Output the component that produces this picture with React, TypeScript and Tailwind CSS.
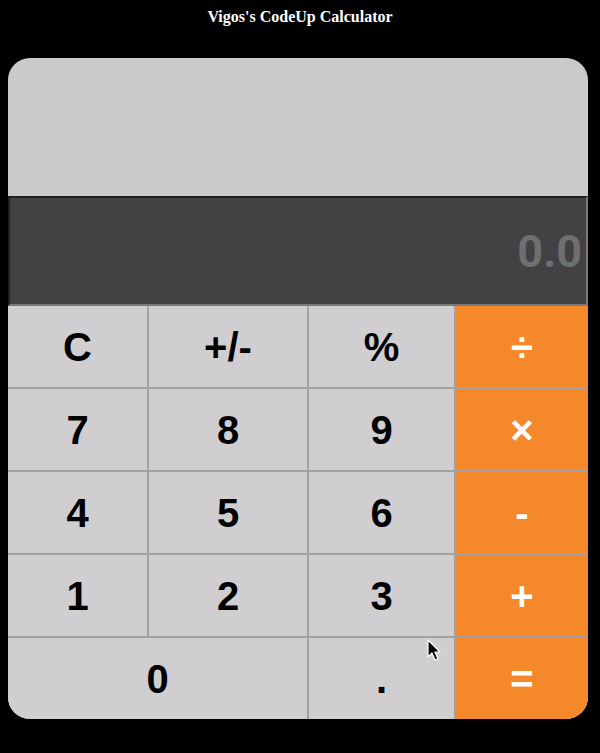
import React from "react";

type Key = { label: string; op?: boolean; wide?: boolean };

const keys: Key[] = [
  { label: "C" },
  { label: "+/-" },
  { label: "%" },
  { label: "÷", op: true },
  { label: "7" },
  { label: "8" },
  { label: "9" },
  { label: "×", op: true },
  { label: "4" },
  { label: "5" },
  { label: "6" },
  { label: "-", op: true },
  { label: "1" },
  { label: "2" },
  { label: "3" },
  { label: "+", op: true },
  { label: "0", wide: true },
  { label: "." },
  { label: "=", op: true },
];

const App: React.FC = () => {
  return (
    <div className="min-h-[753px] bg-black pt-[6px] px-2">
      {/* Title */}
      <h3 className="text-center text-white font-bold text-[16px] leading-[22px] font-['Liberation_Serif',serif]">
        Vigos's CodeUp Calculator
      </h3>

      {/* Calculator body */}
      <div className="relative mt-[30px] w-[580px] rounded-[22px] overflow-hidden bg-[#cbc9cc]">
        <div className="h-[138px]" />

        {/* Display */}
        <div className="h-[110px] bg-[#434144] border-2 border-t-[#1f1f1f] border-l-[#1f1f1f] border-b-[#7a787b] border-r-[#7a787b] flex items-center justify-end pr-[4px]">
          <span className="text-[#6f6e70] font-bold text-[45px] font-['Roboto',sans-serif] mt-[2px]">
            0.0
          </span>
        </div>

        {/* Keys */}
        <div className="grid grid-cols-[139px_158px_145px_132px] auto-rows-[81px] gap-[2px] bg-[#a2a1a3]">
          {keys.map((k) => (
            <button
              key={k.label}
              className={
                (k.op ? "bg-[#f4882b] text-white " : "bg-[#d0ced1] text-black ") +
                (k.wide ? "col-span-2 " : "") +
                "flex items-center justify-center font-bold text-[40px] font-['Liberation_Sans',Arial,sans-serif]"
              }
            >
              {k.label}
            </button>
          ))}
        </div>

        {/* Mouse pointer */}
        <svg
          className="absolute left-[419px] top-[581px]"
          width="16"
          height="24"
          viewBox="0 0 16 24"
        >
          <path
            d="M1 1 L1 18 L5 14 L8 21 L11 20 L8 13 L13 13 Z"
            fill="black"
            stroke="white"
            strokeWidth="1.2"
            strokeLinejoin="round"
          />
        </svg>
      </div>
    </div>
  );
};

export default App;
